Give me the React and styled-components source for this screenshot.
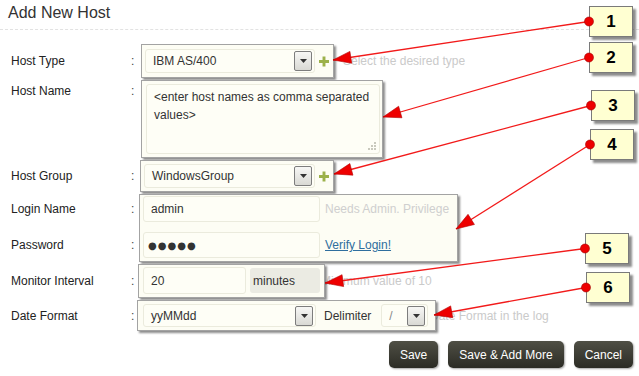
import React from 'react';
import styled, { createGlobalStyle } from 'styled-components';

const GlobalStyle = createGlobalStyle`
  html, body {
    margin: 0;
    padding: 0;
    background: #fff;
    font-family: "Liberation Sans", Arial, sans-serif;
  }
`;

const callouts = [
    { n: 1, x: 589, y: 6, tip: [333, 60] },
    { n: 2, x: 589, y: 42, tip: [383, 117] },
    { n: 3, x: 591, y: 90, tip: [334, 174] },
    { n: 4, x: 590, y: 129, tip: [456, 229] },
    { n: 5, x: 585, y: 233, tip: [325, 283] },
    { n: 6, x: 586, y: 272, tip: [434, 315] }
];

const BOX_H = 31;

function headPoints(from, to) {
    const dx = to[0] - from[0];
    const dy = to[1] - from[1];
    const len = Math.hypot(dx, dy);
    const ux = dx / len;
    const uy = dy / len;
    const bx = to[0] - ux * 18;
    const by = to[1] - uy * 18;
    const w = 6;
    return `${to[0]},${to[1]} ${bx - uy * w},${by + ux * w} ${bx + uy * w},${by - ux * w}`;
}

const DropButton = () => (
    <DropBtn>
        <svg width="7" height="4" viewBox="0 0 7 4">
            <path d="M0 0 L7 0 L3.5 4 Z" fill="#333" />
        </svg>
    </DropBtn>
);

const PlusIcon = () => (
    <svg width="11" height="11" viewBox="0 0 11 11">
        <path d="M5.5 0 V11 M0 5.5 H11" stroke="#9cb14a" strokeWidth="3.2" />
    </svg>
);

export default function App() {
    return (
        <Page>
            <GlobalStyle />
            <Title>Add New Host</Title>

            <Form>
                <Row>
                    <Lead><Label>Host Type</Label><Colon>:</Colon></Lead>
                    <Panel $w={193} $pad="4px 4px 4px 3px">
                        <Select $w={170} $h={24}>
                            <span>IBM AS/400</span>
                            <DropButton />
                        </Select>
                        <PlusIcon />
                    </Panel>
                    <Hint $gap={9}>Select the desired type</Hint>
                </Row>

                <Row $top>
                    <Lead $mt={2} $h={18}><Label>Host Name</Label><Colon>:</Colon></Lead>
                    <Panel $w={242} $pad="3px 2px 3px 4px">
                        <TextBox>
                            &lt;enter host names as comma separated values&gt;
                            <Grip>
                                <svg width="9" height="9" viewBox="0 0 9 9" fill="#c9c9bd">
                                    <rect x="7" y="1" width="2" height="2" />
                                    <rect x="4" y="4" width="2" height="2" />
                                    <rect x="7" y="4" width="2" height="2" />
                                    <rect x="1" y="7" width="2" height="2" />
                                    <rect x="4" y="7" width="2" height="2" />
                                    <rect x="7" y="7" width="2" height="2" />
                                </svg>
                            </Grip>
                        </TextBox>
                    </Panel>
                </Row>

                <Row>
                    <Lead><Label>Host Group</Label><Colon>:</Colon></Lead>
                    <Panel $w={194} $shift={-1} $pad="3px 4px 3px 3px">
                        <Select $w={171} $h={24}>
                            <span>WindowsGroup</span>
                            <DropButton />
                        </Select>
                        <PlusIcon />
                    </Panel>
                </Row>

                <Row $top>
                    <LeadStack>
                        <Lead $h={26}><Label>Login Name</Label><Colon>:</Colon></Lead>
                        <Lead $h={26}><Label>Password</Label><Colon>:</Colon></Lead>
                    </LeadStack>
                    <Panel $w={319} $shift={-2} $pad="1px 4px 3px 3px" $column>
                        <SubRow>
                            <Field $w={177} defaultValue="admin" readOnly />
                            <Note>Needs Admin. Privilege</Note>
                        </SubRow>
                        <SubRow>
                            <Field $w={177} $dots defaultValue="●●●●●" readOnly />
                            <VerifyLink href="#">Verify Login!</VerifyLink>
                        </SubRow>
                    </Panel>
                </Row>

                <Row>
                    <Lead><Label>Monitor Interval</Label><Colon>:</Colon></Lead>
                    <Panel $w={187} $shift={-3} $pad="2px 3px 3px 4px">
                        <Field $w={103} $h={27} defaultValue="20" readOnly />
                        <Unit>minutes</Unit>
                    </Panel>
                    <Hint $gap={-4}>Minimum value of 10</Hint>
                </Row>

                <Row>
                    <Lead><Label>Date Format</Label><Colon>:</Colon></Lead>
                    <Panel $w={299} $shift={-4} $pad="3px 6px 3px 5px">
                        <Select $w={173} $h={23}>
                            <span>yyMMdd</span>
                            <DropButton />
                        </Select>
                        <Delimiter>Delimiter</Delimiter>
                        <Select $w={47} $h={23} $muted>
                            <span>/</span>
                            <DropButton />
                        </Select>
                    </Panel>
                    <Hint $gap={-6}>Date Format in the log</Hint>
                </Row>
            </Form>

            <ButtonBar>
                <Button>Save</Button>
                <Button>Save &amp; Add More</Button>
                <Button>Cancel</Button>
            </ButtonBar>

            {callouts.map((c) => (
                <NumberBox key={c.n} $x={c.x} $y={c.y}>{c.n}</NumberBox>
            ))}

            <ArrowLayer width="639" height="376" viewBox="0 0 639 376">
                {callouts.map((c) => {
                    const from = [c.x, c.y + BOX_H / 2];
                    return (
                        <g key={c.n}>
                            <line x1={from[0]} y1={from[1]} x2={c.tip[0]} y2={c.tip[1]} stroke="#f21a1a" strokeWidth="1.3" />
                            <polygon points={headPoints(from, c.tip)} fill="#ee0000" stroke="#b00000" strokeWidth="0.6" />
                            <circle cx={from[0]} cy={from[1]} r="4.5" fill="#ee0000" stroke="#a00000" strokeWidth="0.6" />
                        </g>
                    );
                })}
            </ArrowLayer>
        </Page>
    );
}

const Page = styled.div`
    position: relative;
    width: 639px;
    height: 376px;
    overflow: hidden;
    background: #fff;
    color: #222;
    font-size: 12px;
`;

const Title = styled.h1`
    margin: 0;
    padding: 3px 0 6px 8px;
    height: 20px;
    line-height: 20px;
    font-size: 16px;
    font-weight: normal;
    color: #333;
    border-bottom: 1px dashed #e2e2e2;
`;

const Form = styled.div`
    display: flex;
    flex-direction: column;
    gap: 2px;
    margin-top: 14px;
    padding-left: 11px;
`;

const Row = styled.div`
    display: flex;
    align-items: ${(p) => (p.$top ? 'flex-start' : 'center')};
`;

const Lead = styled.div`
    display: flex;
    align-items: center;
    width: 130px;
    flex: none;
    height: ${(p) => (p.$h ? `${p.$h}px` : 'auto')};
    margin-top: ${(p) => p.$mt || 0}px;
`;

const LeadStack = styled.div`
    display: flex;
    flex-direction: column;
    gap: 10px;
    padding-top: 2px;
`;

const Label = styled.span`
    width: 120px;
    font-size: 12px;
    line-height: 18px;
    color: #222;
`;

const Colon = styled.span`
    width: 10px;
    color: #444;
`;

const Panel = styled.div`
    position: relative;
    z-index: 1;
    box-sizing: border-box;
    width: ${(p) => p.$w}px;
    margin-left: ${(p) => p.$shift || 0}px;
    padding: ${(p) => p.$pad};
    display: flex;
    flex-direction: ${(p) => (p.$column ? 'column' : 'row')};
    gap: ${(p) => (p.$column ? '10px' : '4px')};
    align-items: ${(p) => (p.$column ? 'stretch' : 'center')};
    background: #fdfdf4;
    border: 1px solid #a3a3a3;
    box-shadow: 2px 2px 2px rgba(0, 0, 0, 0.45);
`;

const Hint = styled.span`
    margin-left: ${(p) => p.$gap}px;
    color: #cacaca;
    font-size: 12px;
    white-space: nowrap;
`;

const Select = styled.div`
    box-sizing: border-box;
    width: ${(p) => p.$w}px;
    height: ${(p) => p.$h}px;
    flex: none;
    display: flex;
    align-items: center;
    justify-content: space-between;
    padding: 0 2px 0 7px;
    background: #fefef6;
    border: 1px solid #ebebdd;
    border-radius: 3px;
    color: ${(p) => (p.$muted ? '#888' : '#333')};
    font-size: 12px;
`;

const DropBtn = styled.span`
    box-sizing: border-box;
    width: 18px;
    height: 20px;
    display: flex;
    align-items: center;
    justify-content: center;
    border: 1px solid #7d7d7d;
    border-radius: 2px;
    background: linear-gradient(#f7f7f5, #d9d9d4);
`;

const TextBox = styled.div`
    position: relative;
    box-sizing: border-box;
    width: 234px;
    height: 70px;
    padding: 3px 7px;
    background: #fefef6;
    border: 1px solid #ebebdd;
    border-radius: 3px;
    color: #333;
    font-size: 12px;
    line-height: 18px;
`;

const Grip = styled.span`
    position: absolute;
    right: 3px;
    bottom: 3px;
    line-height: 0;
`;

const SubRow = styled.div`
    display: flex;
    align-items: center;
    gap: 5px;
`;

const Field = styled.input`
    box-sizing: border-box;
    width: ${(p) => p.$w}px;
    height: ${(p) => p.$h || 26}px;
    flex: none;
    padding: 0 ${(p) => (p.$dots ? 4 : 7)}px;
    background: #fefef6;
    border: 1px solid #ebebdd;
    border-radius: 3px;
    color: #333;
    font-family: ${(p) => (p.$dots ? '"DejaVu Sans", sans-serif' : '"Liberation Sans", Arial, sans-serif')};
    font-size: ${(p) => (p.$dots ? 10 : 12)}px;
    letter-spacing: ${(p) => (p.$dots ? '1px' : 'normal')};
    outline: none;
`;

const Note = styled.span`
    color: #cfcfcf;
    font-size: 12px;
    white-space: nowrap;
`;

const VerifyLink = styled.a`
    color: #2f6e9e;
    font-size: 12px;
    text-decoration: underline;
`;

const Unit = styled.span`
    box-sizing: border-box;
    width: 70px;
    height: 25px;
    display: flex;
    align-items: center;
    padding-left: 3px;
    background: #ebebe3;
    border-radius: 3px;
    color: #333;
`;

const Delimiter = styled.span`
    margin: 0 6px 0 4px;
    color: #333;
`;

const ButtonBar = styled.div`
    display: flex;
    justify-content: flex-end;
    gap: 10px;
    margin-top: 10px;
    padding-right: 6px;
`;

const Button = styled.button`
    height: 27px;
    padding: 0 11px;
    border: none;
    border-radius: 5px;
    background: linear-gradient(#4f4f45, #2c2c25);
    box-shadow: 1px 1px 2px rgba(0, 0, 0, 0.35);
    color: #fff;
    font-family: "Liberation Sans", Arial, sans-serif;
    font-size: 12px;
`;

const NumberBox = styled.div`
    position: absolute;
    left: ${(p) => p.$x}px;
    top: ${(p) => p.$y}px;
    z-index: 2;
    box-sizing: border-box;
    width: 44px;
    height: ${BOX_H}px;
    display: flex;
    align-items: center;
    justify-content: center;
    background: #ffffd2;
    border: 1px solid #7a7a7a;
    box-shadow: 3px 3px 2px rgba(0, 0, 0, 0.45);
    font-size: 17px;
    font-weight: bold;
    color: #000;
`;

const ArrowLayer = styled.svg`
    position: absolute;
    left: 0;
    top: 0;
    z-index: 3;
    pointer-events: none;
`;
